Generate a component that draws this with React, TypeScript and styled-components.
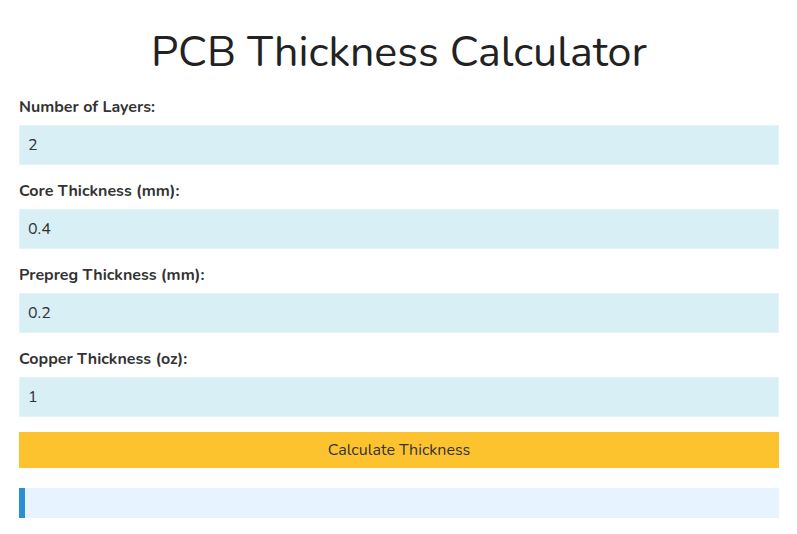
import React, { useState } from 'react'
import styled, { createGlobalStyle } from 'styled-components'

const GlobalStyle = createGlobalStyle`
  body {
    margin: 0;
    background: #ffffff;
    font-family: Nunito, Lato, 'Noto Sans', sans-serif;
    color: #333333;
  }
`

const fields = [
  { id: 'layers', label: 'Number of Layers:', value: '2' },
  { id: 'core', label: 'Core Thickness (mm):', value: '0.4' },
  { id: 'prepreg', label: 'Prepreg Thickness (mm):', value: '0.2' },
  { id: 'copper', label: 'Copper Thickness (oz):', value: '1' },
]

const Page = styled.div`
  padding: 0 18px 16px 19px;
`

const Title = styled.h1`
  margin: 26px 0 18px;
  font-size: 43px;
  line-height: 53px;
  font-weight: 400;
  text-align: center;
  color: #222222;
`

const Fields = styled.div`
  display: flex;
  flex-direction: column;
  gap: 16px;
  margin-bottom: 15px;
`

const Field = styled.div`
  display: flex;
  flex-direction: column;
`

const Label = styled.label`
  font-size: 16px;
  line-height: 21px;
  font-weight: 700;
  color: #333333;
  margin-bottom: 7px;
`

const Input = styled.input`
  box-sizing: border-box;
  height: 40px;
  padding: 0 8px;
  border: 1px solid #e3f4f8;
  background: #d7eff5;
  font-family: inherit;
  font-size: 16px;
  color: #333333;
  outline: none;
`

const Button = styled.button`
  display: block;
  width: 100%;
  height: 36px;
  border: none;
  background: #fcc32f;
  font-family: inherit;
  font-size: 16px;
  color: #333333;
  cursor: pointer;
`

const Result = styled.div`
  margin-top: 20px;
  height: 30px;
  background: #e7f3fe;
  border-left: 6px solid #2b8fd6;
`

export default function App() {
  const [values, setValues] = useState<Record<string, string>>(
    Object.fromEntries(fields.map(f => [f.id, f.value]))
  )

  return (
    <Page>
      <GlobalStyle />
      <Title>PCB Thickness Calculator</Title>
      <Fields>
        {fields.map(f => (
          <Field key={f.id}>
            <Label htmlFor={f.id}>{f.label}</Label>
            <Input
              id={f.id}
              value={values[f.id]}
              onChange={e => setValues({ ...values, [f.id]: e.target.value })}
            />
          </Field>
        ))}
      </Fields>
      <Button>Calculate Thickness</Button>
      <Result />
    </Page>
  )
}
